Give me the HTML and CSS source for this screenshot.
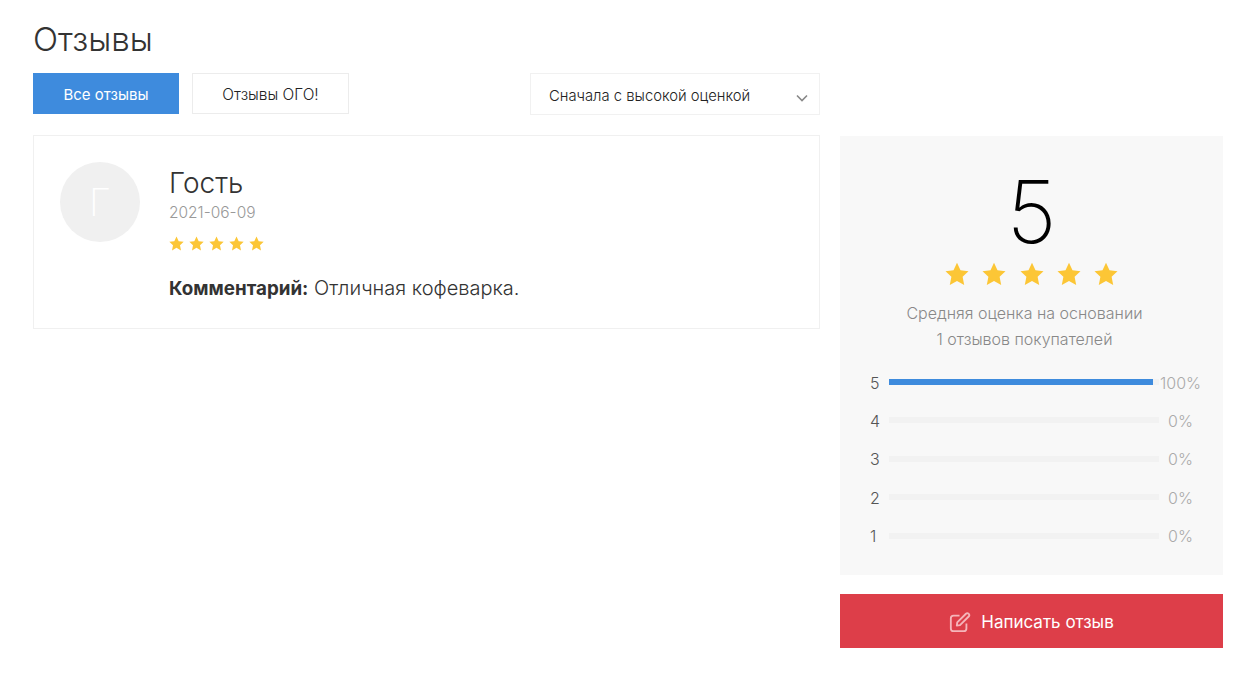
FILE: index.html
```html
<!DOCTYPE html>
<html lang="ru">
<head>
<meta charset="utf-8">
<title>Отзывы</title>
<link rel="stylesheet" href="styles.css">
</head>
<body>
<svg class="defs" width="0" height="0" aria-hidden="true"><defs><symbol id="star" viewBox="0 0 24 24"><path d="M12 .8l3.5 7.4 8 1-5.9 5.6 1.6 8.2L12 18.9l-7.2 4.1 1.6-8.2L.5 9.2l8-1z"/></symbol></defs></svg>
<main class="page">
  <section class="main">
    <h1 class="title">Отзывы</h1>
    <div class="toolbar">
      <div class="tabs">
        <a class="tab tab-active">Все отзывы</a>
        <a class="tab">Отзывы ОГО!</a>
      </div>
      <div class="select">
        <span>Сначала с высокой оценкой</span>
        <svg class="chevron" viewBox="0 0 12 8"><path d="M1 1.5l5 5 5-5"/></svg>
      </div>
    </div>
    <article class="review">
      <div class="avatar">Г</div>
      <div class="review-body">
        <div class="name">Гость</div>
        <div class="date">2021-06-09</div>
        <div class="stars stars-small">
          <svg><use href="#star"/></svg><svg><use href="#star"/></svg><svg><use href="#star"/></svg><svg><use href="#star"/></svg><svg><use href="#star"/></svg>
        </div>
        <p class="comment"><b>Комментарий:</b> Отличная кофеварка.</p>
      </div>
    </article>
  </section>
  <aside class="side">
    <div class="summary">
      <div class="score">5</div>
      <div class="stars stars-big">
        <svg><use href="#star"/></svg><svg><use href="#star"/></svg><svg><use href="#star"/></svg><svg><use href="#star"/></svg><svg><use href="#star"/></svg>
      </div>
      <p class="basis">Средняя оценка на основании<br>1 отзывов покупателей</p>
      <div class="bars">
        <div class="bar-row"><span class="bar-label">5</span><span class="track"><span class="fill"></span></span><span class="pct">100%</span></div>
        <div class="bar-row"><span class="bar-label">4</span><span class="track"></span><span class="pct">0%</span></div>
        <div class="bar-row"><span class="bar-label">3</span><span class="track"></span><span class="pct">0%</span></div>
        <div class="bar-row"><span class="bar-label">2</span><span class="track"></span><span class="pct">0%</span></div>
        <div class="bar-row"><span class="bar-label">1</span><span class="track"></span><span class="pct">0%</span></div>
      </div>
    </div>
    <a class="write">
      <svg class="write-icon" viewBox="0 0 24 24"><path d="M19 13.5V19a3 3 0 0 1-3 3H5a3 3 0 0 1-3-3V8a3 3 0 0 1 3-3h6.5"/><path d="M9 12.5L18.5 3a2 2 0 0 1 2.8 0l.2.2a2 2 0 0 1 0 2.8L12 15.500l-3.500.5z"/></svg>
      <span>Написать отзыв</span>
    </a>
  </aside>
</main>
</body>
</html>
```
FILE: styles.css
```css
* { box-sizing: border-box; }
html, body { margin: 0; padding: 0; background: #fff; }
body { font-family: "Inter", "Open Sans", sans-serif; color: #333; }
.defs { display: block; height: 0; }
.page { width: 1252px; height: 677px; padding: 19px 29px 0 33px; display: flex; gap: 20px; overflow: hidden; }
.main { width: 787px; flex: none; }
.side { width: 383px; flex: none; padding-top: 117px; }
.title { margin: 0; font-size: 33px; line-height: 40px; font-weight: 300; color: #333; }
.toolbar { display: flex; justify-content: space-between; margin-top: 14px; }
.tabs { display: flex; gap: 13px; }
.tab { height: 41px; padding-top: 2px; display: flex; align-items: center; justify-content: center; font-size: 15.400px; font-weight: 300; border: 1px solid #ececec; width: 157px; color: #222; }
.tab-active { width: 146px; background: #3e8bdd; border-color: #3e8bdd; color: #fff; font-size: 15px; font-weight: 400; }
.select { width: 290px; height: 42px; border: 1px solid #f1f1f1; display: flex; align-items: center; justify-content: space-between; padding: 3px 11px 0 18px; font-size: 14.800px; font-weight: 300; color: #222; }
.chevron { width: 12px; height: 8px; margin-top: 4px; fill: none; stroke: #888; stroke-width: 1.600; }
.review { margin-top: 20px; height: 194px; border: 1px solid #f0f0f0; padding: 26px; display: flex; gap: 29px; }
.avatar { width: 80px; height: 80px; flex: none; border-radius: 50%; background: #f0f0f0; color: #fff; font-size: 38px; font-weight: 200; display: flex; align-items: center; justify-content: center; }
.name { font-size: 28px; line-height: 34px; font-weight: 300; color: #333; margin-top: 4px; }
.date { font-size: 15.500px; line-height: 22px; font-weight: 300; color: #999; margin-top: 2px; }
.stars { display: flex; fill: #fcc636; }
.stars-small { gap: 5px; margin-top: 12px; }
.stars-small svg { width: 15px; height: 15px; }
.comment { margin: 24px 0 0; font-size: 20px; line-height: 26px; font-weight: 300; color: #333; white-space: nowrap; }
.comment b { font-size: 18.800px; font-weight: 700; }
.summary { height: 439px; background: #f8f8f8; display: flex; flex-direction: column; align-items: center; padding-top: 26px; }
.score { font-size: 86px; line-height: 100px; font-weight: 200; color: #000; }
.stars-big { gap: 13.300px; margin-top: 0; }
.stars-big svg { width: 24px; height: 24px; }
.basis { margin: 14px 14px 0 0; font-size: 16px; line-height: 26px; font-weight: 300; text-align: center; color: #888; }
.bars { width: 100%; margin-top: 17px; display: flex; flex-direction: column; gap: 12.400px; }
.bar-row { display: flex; align-items: center; height: 26px; padding-left: 30px; }
.bar-label { width: 19px; padding-top: 1px; font-size: 16px; color: #555; font-weight: 300; }
.track { width: 270px; height: 6px; background: #f2f2f2; display: block; }
.fill { display: block; width: 264px; height: 6px; background: #3e8bdd; }
.pct { flex: 1; padding: 1px 21px 0 0; text-align: center; font-size: 16px; color: #aaa; font-weight: 300; }
.write { height: 54px; margin-top: 19px; padding-top: 1px; background: #dd3e49; color: #fff; display: flex; align-items: center; justify-content: center; gap: 10px; font-size: 17px; }
.write-icon { width: 22px; height: 22px; fill: none; stroke: #f5b5ba; stroke-width: 2; stroke-linejoin: round; }
```
